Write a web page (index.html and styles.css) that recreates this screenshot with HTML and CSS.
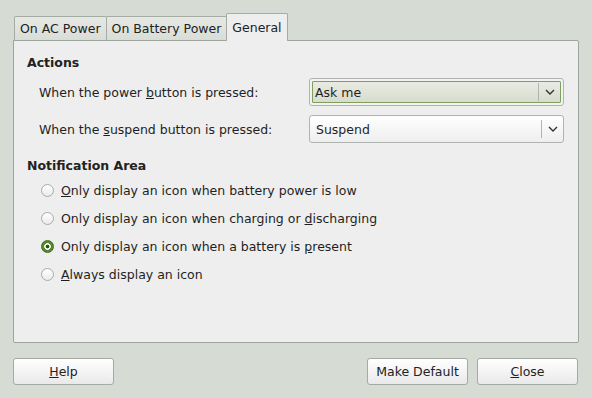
FILE: index.html
```html
<!DOCTYPE html>
<html lang="en">
<head>
    <meta charset="UTF-8" />
    <title>Power Management Preferences</title>
    <link rel="stylesheet" href="styles.css">
</head>
<body>
    <div class="dialog">
        <div class="tabs">
            <div class="tab">On AC Power</div>
            <div class="tab">On Battery Power</div>
            <div class="tab activa">General</div>
        </div>

        <div class="panel">
            <h2 class="seccion">Actions</h2>
            <div class="fila">
                <span class="etiqueta">When the power <u>b</u>utton is pressed:</span>
                <div class="combo foco">
                    <div class="interior">
                        <span class="valor">Ask me</span>
                        <span class="flecha"><svg width="10" height="6" viewBox="0 0 10 6"><path d="M1 1 L5 5 L9 1" fill="none" stroke="#333" stroke-width="1.4"/></svg></span>
                    </div>
                </div>
            </div>
            <div class="fila">
                <span class="etiqueta">When the <u>s</u>uspend button is pressed:</span>
                <div class="combo">
                    <div class="interior">
                        <span class="valor">Suspend</span>
                        <span class="flecha"><svg width="10" height="6" viewBox="0 0 10 6"><path d="M1 1 L5 5 L9 1" fill="none" stroke="#333" stroke-width="1.4"/></svg></span>
                    </div>
                </div>
            </div>

            <h2 class="seccion notif">Notification Area</h2>
            <div class="opciones">
                <div class="opcion"><span class="radio"></span><span><u>O</u>nly display an icon when battery power is low</span></div>
                <div class="opcion"><span class="radio"></span><span>Only display an icon when charging or <u>d</u>ischarging</span></div>
                <div class="opcion"><span class="radio marcado"></span><span>Only display an icon when a battery is <u>p</u>resent</span></div>
                <div class="opcion"><span class="radio"></span><span><u>A</u>lways display an icon</span></div>
            </div>
        </div>

        <div class="botonera">
            <button class="boton"><u>H</u>elp</button>
            <span class="hueco"></span>
            <button class="boton">Make Default</button>
            <button class="boton"><u>C</u>lose</button>
        </div>
    </div>
</body>
</html>
```

FILE: styles.css
```css
body {
    margin: 0;
    background: #d6dbd4;
    font-family: 'DejaVu Sans', sans-serif;
    font-size: 12.5px;
    color: #1f1f1f;
}
.dialog {
    padding: 13px 13px 0 13px;
    width: 566px;
}
.tabs {
    display: flex;
    align-items: flex-end;
    height: 27px;
    padding-left: 1px;
}
.tab {
    height: 23px;
    line-height: 23px;
    padding: 0 5px;
    background: linear-gradient(#e6e8e4, #d9ddd7);
    border: 1px solid #a5aca4;
    border-bottom: none;
    margin-right: -1px;
    border-radius: 2px 2px 0 0;
    color: #222;
}
.tab.activa {
    height: 27px;
    line-height: 27px;
    background: #eeeeee;
    margin-bottom: -1px;
    position: relative;
    z-index: 1;
}
.panel {
    height: 301px;
    background: #eeeeee;
    border: 1px solid #9ca49b;
    border-radius: 0 2px 2px 2px;
    padding: 0 14px 0 13px;
}
.seccion {
    font-size: 12.5px;
    font-weight: bold;
    margin: 14px 0 8px 0;
    color: #222;
}
.seccion.notif {
    margin-top: 15px;
    margin-bottom: 3px;
}
.fila {
    display: flex;
    align-items: center;
    justify-content: space-between;
    padding-left: 12px;
    margin-bottom: 9px;
}
.combo {
    box-sizing: border-box;
    width: 255px;
    height: 28px;
    display: flex;
    background: linear-gradient(#ffffff, #eeeeee);
    border: 1px solid #b0b4ae;
    border-radius: 3px;
}
.interior {
    flex: 1;
    display: flex;
    align-items: center;
    padding-left: 6px;
}
.combo.foco {
    padding: 2px;
    background: #f2f2f0;
}
.combo.foco .interior {
    padding-left: 2px;
    background: linear-gradient(#e9ebe3, #d8dccd);
    border: 1px solid #7f9e5f;
    border-radius: 1px;
}
.valor {
    flex: 1;
}
.flecha {
    width: 21px;
    height: 18px;
    border-left: 1px solid #b0b4ae;
    display: flex;
    align-items: center;
    justify-content: center;
}
.opciones {
    padding-left: 14px;
}
.opcion {
    display: flex;
    align-items: center;
    gap: 7px;
    height: 28px;
}
.radio {
    width: 11px;
    height: 11px;
    border: 1px solid #a8aca6;
    border-radius: 50%;
    background: linear-gradient(#ffffff, #eaeaea);
}
.radio.marcado {
    border-color: #3f6b20;
    background: radial-gradient(circle, #2c4f14 0 1.6px, #ffffff 2.2px 3px, #55892e 3.6px);
}
.botonera {
    display: flex;
    gap: 9px;
    margin: 15px 1px 0 0;
}
.hueco {
    flex: 1;
}
.boton {
    width: 101px;
    height: 27px;
    font-family: 'DejaVu Sans', sans-serif;
    font-size: 12.5px;
    color: #222;
    background: linear-gradient(#ffffff, #e9e9e9);
    border: 1px solid #a6aaa4;
    border-radius: 3px;
    padding: 0;
}
```
